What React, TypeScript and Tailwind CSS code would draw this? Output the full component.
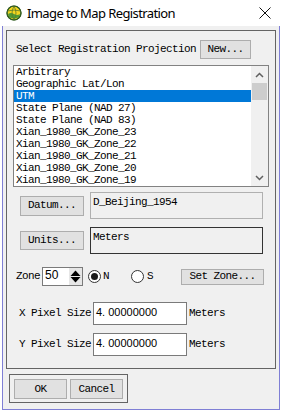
import React from "react";

const mono = "font-['Liberation_Mono',monospace] text-[11px] tracking-[-0.6px] text-black";

function Btn({ w, h, children, className = "" }: { w: string; h: string; children: React.ReactNode; className?: string }) {
  return (
    <div className={`${w} ${h} shrink-0 border border-[#adadad] bg-[#e1e1e1] flex items-center justify-center ${mono} ${className}`}>
      {children}
    </div>
  );
}

function Chevron({ up }: { up?: boolean }) {
  return (
    <svg width="9" height="6" viewBox="0 0 9 6">
      <path d={up ? "M1 5 L4.5 1.5 L8 5" : "M1 1 L4.5 4.5 L8 1"} fill="none" stroke="#606060" strokeWidth="1.5" />
    </svg>
  );
}

function Radio({ checked }: { checked?: boolean }) {
  return (
    <div className="w-[13px] h-[13px] rounded-full border border-[#333] bg-white flex items-center justify-center shrink-0">
      {checked && <div className="w-[7px] h-[7px] rounded-full bg-[#1a1a1a]" />}
    </div>
  );
}

const items = [
  "Arbitrary",
  "Geographic Lat/Lon",
  "UTM",
  "State Plane (NAD 27)",
  "State Plane (NAD 83)",
  "Xian_1980_GK_Zone_23",
  "Xian_1980_GK_Zone_22",
  "Xian_1980_GK_Zone_21",
  "Xian_1980_GK_Zone_20",
  "Xian_1980_GK_Zone_19",
];

export default function App() {
  return (
    <div className="w-[282px] h-[412px] bg-white overflow-hidden">
      {/* Title bar */}
      <div className="h-[26px] flex items-center">
        <svg className="ml-[6px] shrink-0" width="16" height="16" viewBox="0 0 16 16">
          <circle cx="8" cy="8" r="7" fill="#f3d41f" stroke="#3f6b2b" strokeWidth="1.2" />
          <path d="M2 9 Q5 7 8 9 T14 9 L13 12 Q8 15 3 12 Z" fill="#4f9a35" />
          <path d="M8 1.2 Q4 8 8 14.8 M8 1.2 Q12 8 8 14.8 M1.5 6 Q8 4 14.5 6" fill="none" stroke="#5a7a2a" strokeWidth="0.8" />
          <circle cx="8" cy="8" r="7" fill="none" stroke="#2f5a22" strokeWidth="1.1" />
        </svg>
        <span className="ml-[5px] font-['Noto_Sans',sans-serif] text-[13px] tracking-[-0.6px] text-black leading-none">Image to Map Registration</span>
        <svg className="ml-auto mr-[11px]" width="12" height="12" viewBox="0 0 12 12">
          <path d="M0.5 0.5 L11.5 11.5 M11.5 0.5 L0.5 11.5" stroke="#111" strokeWidth="1" />
        </svg>
      </div>

      {/* Body */}
      <div className="mx-[2px] h-[384px] border-x border-b border-[#7f7fd5] bg-[#f0f0f0] flex flex-col">
        {/* Group box */}
        <div className="mt-[4px] ml-[3px] w-[270px] h-[339px] border border-[#646464] flex flex-col shrink-0">
          {/* Row 1 */}
          <div className="mt-[9px] h-[19px] flex items-center">
            <span className={`ml-[9px] w-[184px] ${mono}`}>Select Registration Projection</span>
            <Btn w="w-[51px]" h="h-[19px]">New...</Btn>
          </div>

          {/* Listbox */}
          <div className="mt-[6px] ml-[6px] w-[256px] h-[122px] border border-[#828282] bg-white flex overflow-hidden">
            <div className="w-[237px] flex flex-col">
              {items.map((it, i) => (
                <div
                  key={it}
                  className={`h-[12px] shrink-0 leading-[12px] pl-[2px] ${mono} ${i === 2 ? "bg-[#0078d7] text-white" : ""}`}
                >
                  <span className={i === 2 ? "text-white" : ""}>{it}</span>
                </div>
              ))}
            </div>
            <div className="w-[17px] bg-[#f0f0f0] flex flex-col items-center">
              <div className="h-[17px] flex items-center justify-center">
                <Chevron up />
              </div>
              <div className="w-[15px] h-[17px] bg-[#cdcdcd]" />
              <div className="mt-auto h-[17px] flex items-center justify-center">
                <Chevron />
              </div>
            </div>
          </div>

          {/* Datum row */}
          <div className="mt-[5px] h-[27px] flex items-center">
            <Btn w="w-[64px]" h="h-[20px]" className="ml-[13px]">Datum...</Btn>
            <div className={`ml-[6px] w-[173px] h-[27px] border border-[#b0b0b0] bg-[#f0f0f0] pl-[2px] pt-[3px] leading-[12px] ${mono}`}>
              D_Beijing_1954
            </div>
          </div>

          {/* Units row */}
          <div className="mt-[8px] h-[27px] flex items-center">
            <Btn w="w-[64px]" h="h-[19px]" className="ml-[13px]">Units...</Btn>
            <div className={`ml-[6px] w-[173px] h-[27px] border border-[#333] bg-[#f0f0f0] pl-[2px] pt-[3px] leading-[12px] ${mono}`}>
              Meters
            </div>
          </div>

          {/* Zone row */}
          <div className="mt-[13px] h-[19px] flex items-center">
            <span className={`ml-[9px] w-[26px] ${mono}`}>Zone</span>
            <div className="w-[41px] h-[19px] border border-[#7a7a7a] bg-white flex shrink-0">
              <div className="flex-1 pl-[2px] font-['Liberation_Sans',sans-serif] text-[12px] leading-[14px] text-black">50</div>
              <div className="w-[13px] bg-[#e6e6e6] flex items-center justify-center">
                <svg width="11" height="13" viewBox="0 0 11 13">
                  <path d="M5.5 0.5 L10.5 6 L0.5 6 Z" fill="#000" />
                  <path d="M0.5 7 L10.5 7 L5.5 12.5 Z" fill="#000" />
                </svg>
              </div>
            </div>
            <div className="ml-[5px] w-[43px] flex items-center">
              <Radio checked />
              <span className={`ml-[2px] ${mono}`}>N</span>
            </div>
            <div className="w-[50px] flex items-center">
              <Radio />
              <span className={`ml-[3px] ${mono}`}>S</span>
            </div>
            <Btn w="w-[83px]" h="h-[16px]">Set Zone...</Btn>
          </div>

          {/* X Pixel Size */}
          <div className="mt-[16px] h-[23px] flex items-center">
            <span className={`ml-[12px] w-[74px] ${mono}`}>X Pixel Size</span>
            <div className="w-[94px] h-[23px] border border-[#7a7a7a] bg-white pl-[2px] pt-[2px] font-['Liberation_Sans',sans-serif] text-[11px] leading-[14px] text-black">
              4.<span className="ml-[3px]">00000000</span>
            </div>
            <span className={`ml-[2px] ${mono}`}>Meters</span>
          </div>

          {/* Y Pixel Size */}
          <div className="mt-[8px] h-[23px] flex items-center">
            <span className={`ml-[12px] w-[74px] ${mono}`}>Y Pixel Size</span>
            <div className="w-[94px] h-[23px] border border-[#7a7a7a] bg-white pl-[2px] pt-[2px] font-['Liberation_Sans',sans-serif] text-[11px] leading-[14px] text-black">
              4.<span className="ml-[3px]">00000000</span>
            </div>
            <span className={`ml-[2px] ${mono}`}>Meters</span>
          </div>
        </div>

        {/* Bottom buttons */}
        <div className="mt-[5px] ml-[6px] w-[119px] h-[29px] border border-[#646464] flex gap-[3px] pl-[4px] pt-[4px] shrink-0">
          <Btn w="w-[53px]" h="h-[20px]">OK</Btn>
          <Btn w="w-[53px]" h="h-[20px]">Cancel</Btn>
        </div>
      </div>
    </div>
  );
}
